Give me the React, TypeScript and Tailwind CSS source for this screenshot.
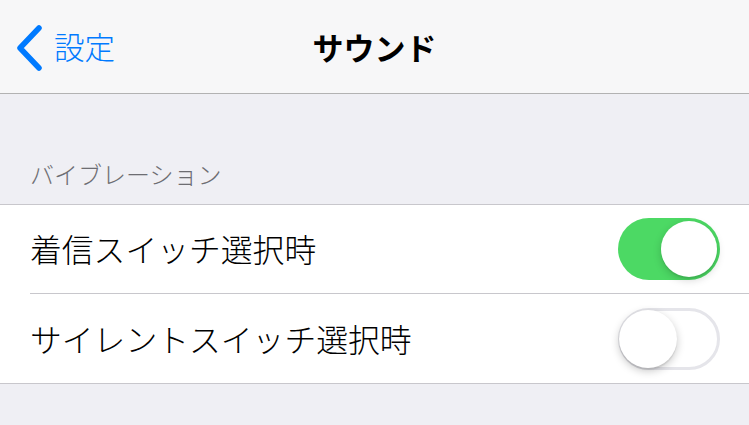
import React from "react";

const font = { fontFamily: '"Noto Sans CJK JP", "Noto Sans", sans-serif' };

function Toggle({ on }: { on: boolean }) {
  return (
    <div
      className={
        on
          ? "relative w-[102px] h-[62px] rounded-full bg-[#4cd964]"
          : "relative w-[102px] h-[62px] rounded-full bg-white border-[3px] border-[#e5e5ea]"
      }
    >
      <div
        className={
          on
            ? "absolute top-[3px] right-[3px] w-[56px] h-[56px] rounded-full bg-white shadow-[0_3px_8px_rgba(0,0,0,0.18),0_2px_1px_rgba(0,0,0,0.06)]"
            : "absolute top-[-1px] left-[-2px] w-[58px] h-[58px] rounded-full bg-white shadow-[0_3px_8px_rgba(0,0,0,0.22),0_2px_1px_rgba(0,0,0,0.08)]"
        }
      />
    </div>
  );
}

export default function App() {
  return (
    <div className="w-[749px] h-[425px] bg-[#efeff4] overflow-hidden" style={font}>
      <div className="relative h-[94px] bg-[#f7f7f8] border-b border-[#b2b2b2] flex items-center justify-center">
        <div className="absolute left-[14px] top-0 h-[93px] flex items-center text-[#007aff]">
          <svg width="30" height="46" viewBox="0 0 30 46" className="mr-[10px] mt-[2px]">
            <polyline
              points="25,3 6,23 25,43"
              fill="none"
              stroke="#007aff"
              strokeWidth="5.5"
              strokeLinecap="round"
              strokeLinejoin="round"
            />
          </svg>
          <span className="text-[30.5px] leading-none font-light">設定</span>
        </div>
        <span className="text-[31px] font-bold text-black leading-none">サウンド</span>
      </div>
      <div className="h-[110px] flex items-end pb-[18px] pl-[30px]">
        <span className="text-[24px] leading-[24px] text-[#6d6d72] font-light">バイブレーション</span>
      </div>
      <div className="bg-white border-y border-[#c8c7cc]">
        <div className="h-[88px] flex items-center justify-between pl-[30px] pr-[29px]">
          <span className="text-[31.8px] leading-none text-black font-light">着信スイッチ選択時</span>
          <Toggle on={true} />
        </div>
        <div className="h-px ml-[30px] bg-[#c8c7cc]" />
        <div className="h-[89px] flex items-center justify-between pl-[30px] pr-[29px]">
          <span className="text-[31.8px] leading-none text-black font-light">サイレントスイッチ選択時</span>
          <Toggle on={false} />
        </div>
      </div>
    </div>
  );
}
